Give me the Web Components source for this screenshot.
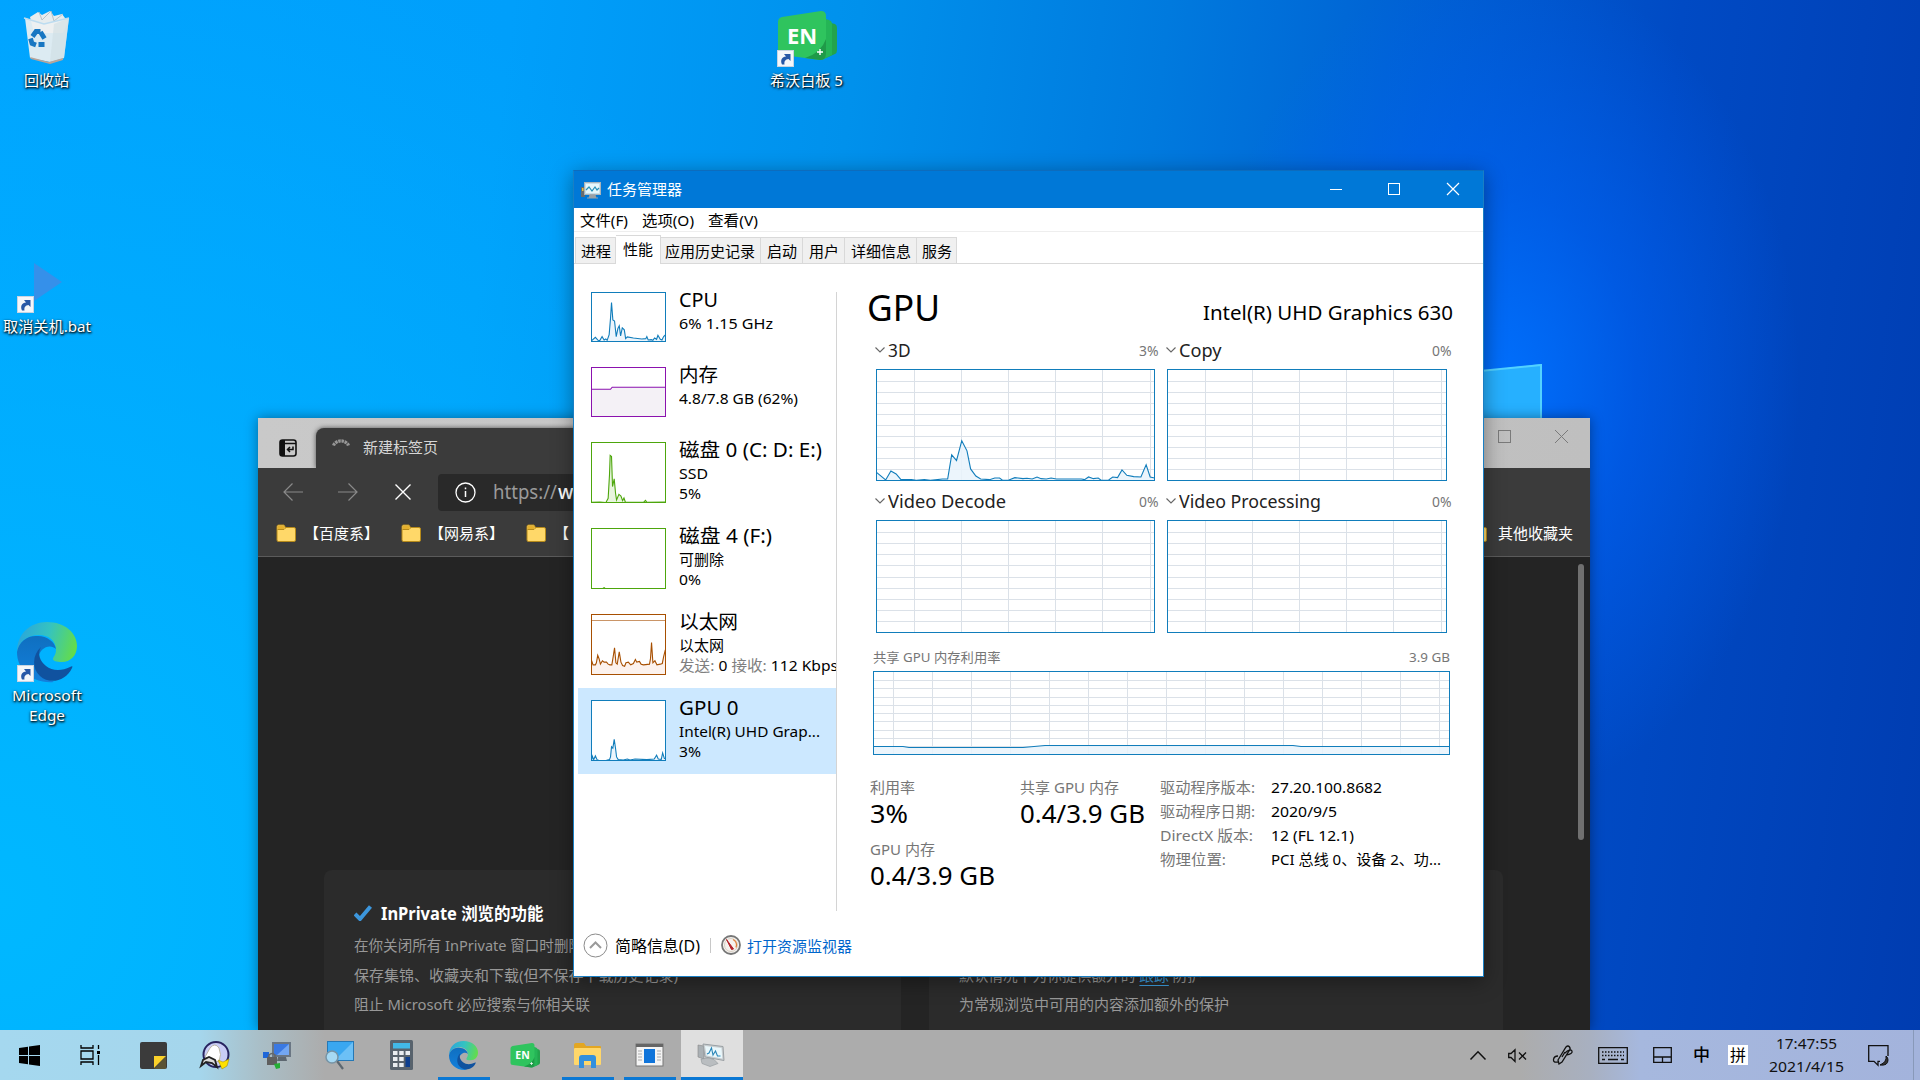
<!DOCTYPE html>
<html lang="zh-CN">
<head>
<meta charset="utf-8">
<title>任务管理器</title>
<style>
html,body{margin:0;height:100%;overflow:hidden}
body{font-family:"Noto Sans","Noto Sans CJK SC",sans-serif;font-size:15px;line-height:20px;color:#000}
</style>
</head>
<body>
<win-desktop></win-desktop>
<script>
const root=(el,html)=>{el.attachShadow({mode:'open'}).innerHTML=html;return el.shadowRoot};

/* Text fitted horizontally to the advance width given in "w". */
customElements.define('ui-text',class extends HTMLElement{
  connectedCallback(){
    if(this.shadowRoot)return;
    const r=root(this,`<style>:host{display:block;white-space:nowrap;flex:none}span{display:inline-block;transform-origin:0 50%;vertical-align:top}</style><span><slot></slot></span>`);
    const w=parseFloat(this.getAttribute('w'));
    if(!w)return;
    this.style.width=w+'px';
    const s=r.querySelector('span'),n=s.getBoundingClientRect().width;
    if(n)s.style.transform=`scaleX(${w/n})`;
  }
});

/* Framed chart; series points live in the coordinate space of "box". */
customElements.define('perf-graph',class extends HTMLElement{
  connectedCallback(){
    const a=n=>this.getAttribute(n);
    const w=+a('w'),h=+a('h'),c=a('color')||'#117dbb',f=a('fill')||'#e9f3fb';
    const lines=(s,v)=>{if(!s)return'';const[o,d,n]=s.split(',').map(Number);let p='';for(let i=0;i<n;i++){const k=Math.round(o+d*i)+.5;p+=v?`M${k} 1V${h-1}`:`M1 ${k}H${w-1}`}return p};
    const b=a('box')||`0 0 ${w} ${h}`,[bx,by,bw,bh]=b.split(' ').map(Number),p=a('points');
    const series=p?`<svg width="${w}" height="${h}" viewBox="${b}" preserveAspectRatio="none"><polygon points="${bx},${by+bh} ${p} ${bx+bw},${by+bh}" fill="${f}" fill-opacity=".85"/><polyline points="${p}" fill="none" stroke="${c}" stroke-width="1.1" vector-effect="non-scaling-stroke"/></svg>`:'';
    const cap=a('cap')?`<path d="M1 ${a('cap')}H${w-1}" stroke="${c}" stroke-opacity=".6"/>`:'';
    root(this,`<style>:host{display:block;flex:none;width:${w}px;height:${h}px}svg{display:block;overflow:hidden}</style>
    <svg width="${w}" height="${h}"><rect width="${w}" height="${h}" fill="#fff"/><path d="${lines(a('gx'),1)}${lines(a('gy'),0)}" stroke="#dbe1e8" fill="none"/>${series}${cap}<rect x=".5" y=".5" width="${w-1}" height="${h-1}" fill="none" stroke="${c}"/></svg>`);
  }
});

const EDGE=`<defs><linearGradient id="ea" x1="0" y1=".3" x2="1" y2=".5"><stop offset="0" stop-color="#2aa5dc"/><stop offset=".5" stop-color="#35c3c0"/><stop offset="1" stop-color="#63dc4c"/></linearGradient><linearGradient id="eb" x1="0" y1="0" x2="0" y2="1"><stop offset="0" stop-color="#0f6fc0"/><stop offset="1" stop-color="#1380dc"/></linearGradient></defs>
<path d="M0 30C0 12 13 0 30 0c18 0 30 11 30 24 0 10-7 16-15 16-6 0-9-1-9-3 0-2 3-4 3-9C39 18 31 13 22 13 10 13 2 20 0 30Z" fill="url(#ea)"/>
<path d="M0 30C2 19 11 13 21 14c9 0 17 6 18 13-6-6-17-1-18 10 0 11 8 19 16 23C15 62 0 48 0 30Z" fill="url(#eb)"/>
<path d="M24 25c-9 8-9 22-1 29 10 9 26 5 32-8 1-2 0-2-2-1-8 4-18 4-24-1-6-5-9-12-5-19Z" fill="#10529f"/>`;
const EN=`<path d="M50 11l8 2q2 1 2 4v22q0 3-2 4l-9 4z" fill="#23a34c"/><path d="M45 7l7 2q3 1 3 4v31l-8 4z" fill="#25b556"/><path d="M5 6L44 0q5 0 5 5v38q0 6-6 6L6 44q-5 0-5-5V11q0-4 4-5Z" fill="#2fc45e"/><path d="M49 28Q44 42 28 47l15 2q6 0 6-6z" fill="#1f9a48"/><path d="M43 38v6M40 41h6" stroke="#fff" stroke-width="1.4"/>`;
const LINK=`<rect x=".5" y=".5" width="16" height="16" fill="#f4f6fa" stroke="#c8d4e2"/><path d="M5 14.5C3 10 5 7 9 6.5L7 4h6.500v7L11.500 9C8.500 9.500 7 11 7.500 14.500Z" fill="#2757a6"/>`;
const TM=`<rect x="0" y="6" width="4" height="10" fill="#676c70"/><rect x="1" y="7" width="1.500" height="3" fill="#e5c040"/><rect x="3.500" y="1.500" width="16" height="12" fill="#c9dfe8" stroke="#a9b4bb"/><rect x="5" y="3" width="13" height="9" fill="#e6f7fc"/><path d="M5 9l3-3 3 4 3-4 2 3 2-2" fill="none" stroke="#2690b8" stroke-width="1.200"/><path d="M9 14h5l1 2.500H8zM6 17h11" fill="#9aa1a6" stroke="#9aa1a6"/>`;
const FOLDER=`<path d="M1 2.500Q1 1 2.500 1H8l1.500 2.500H18q1.500 0 1.500 1.500v11q0 1.500-1.500 1.500H2.500Q1 17.500 1 16Z" fill="#ffd869" stroke="#b68a1a"/><path d="M1.500 5.500H8l2-2" fill="none" stroke="#b68a1a"/><path d="M2 2h5.500L9 3.500 7.800 5H2z" fill="#e5b02c"/>`;

customElements.define('desk-icon',class extends HTMLElement{
  connectedCallback(){
    const art={
     bin:`<path d="M6 7L14 2l4 3 8-4 4 5 8-2 6 8-5 11H10z" fill="#e6ecee"/><path d="M15 2l3 8 9-9 3 10 9-7" fill="none" stroke="#b6c1c8"/><path d="M1 8l20 6 24-6-5 40-14 4L6 48Z" fill="#edf0f1" fill-opacity=".93"/><path d="M0 8l20 6 25-6" fill="none" stroke="#bcdcf0" stroke-width="1.500"/><path d="M45 8l-5 40-14 4 4-38z" fill="#cfdde3" fill-opacity=".6"/><path d="M6 47l19 5 14-4v2l-13 4-19-5z" fill="#b9a59a"/><g fill="none" stroke="#1877c2" stroke-width="4.800"><path d="M8.500 26.500l3.500-5h4.500"/><path d="M16.500 22l4 6.500"/><path d="M20.500 34.500h-6M6.500 28.500l1.500 5 4 1.500"/></g>`,
     bat:`<path d="M17 0l28 19-28 19z" fill="#3590ea"/>`,
     edge:EDGE, en:EN+`<foreignObject x="5" y="10" width="40" height="30"><div style="font:bold 22px/28px 'Noto Sans',sans-serif;color:#fff;text-align:center;text-shadow:none">EN</div></foreignObject>`};
    const k=this.getAttribute('kind'),W=60,H=+this.getAttribute('h');
    root(this,`<style>:host{position:absolute;display:flex;flex-direction:column;align-items:center;color:#fff;text-shadow:1px 1px 2px #000,0 1px 3px rgba(0,0,0,.8)}.p{position:relative;width:${W}px;height:${H}px;margin-bottom:${this.getAttribute('gap')}px}svg{display:block;overflow:visible}.l{position:absolute;left:0;bottom:${this.getAttribute('lb')||0}px}</style>
    <div class="p"><svg width="${W}" height="${H}" viewBox="0 0 ${W} ${H}">${art[k]}</svg>${k=='bin'?'':`<svg class="l" width="17" height="17">${LINK}</svg>`}</div><slot></slot>`);
  }
});

customElements.define('edge-window',class extends HTMLElement{
  connectedCallback(){root(this,`<style>
  :host{position:absolute;left:258px;top:418px;width:1332px;height:612px;background:#242424;display:flex;flex-direction:column;box-shadow:0 0 12px rgba(0,0,0,.4);overflow:hidden;color:#fff}
  svg{display:block;flex:none}
  .top{height:50px;background:linear-gradient(90deg,#c9c9c9,#bfbfbf);display:flex;flex:none}
  .side{width:58px;display:flex;padding:21px 0 0 21px;box-sizing:border-box}
  .tab{width:500px;height:40px;margin-top:10px;background:#3b3b3b;border-radius:8px 0 0 0;display:flex;align-items:center;color:#d6d6d6;box-shadow:0 0 5px rgba(0,0,0,.6);clip-path:inset(-5px 0 0 -5px)}
  .tab svg{margin:-6px 13px 0 16px}.tab ui-text{margin-top:-3px}
  .wb{margin-left:auto;display:flex;gap:44px;padding:12px 22px 0 0}
  .bar{height:48px;flex:none;background:#3b3b3b;display:flex;align-items:center}
  .addr{margin-left:27px;height:37px;width:1030px;background:#292929;border-radius:4px;display:flex;align-items:center;padding-left:17px;box-sizing:border-box;font-size:19px;color:#9a9a9a}
  .addr ui-text{margin-left:17px}.addr b{font-weight:500;color:#fff;margin-left:1px}
  .pill{width:54px;height:37px;border-radius:0 19px 19px 0;background:#0a6fbb;display:flex;align-items:center;justify-content:flex-end;padding-right:5px;box-sizing:border-box;margin-left:-223px}
  .fav{height:41px;flex:none;background:#3b3b3b;border-bottom:1px solid #5b5b5b;display:flex;align-items:flex-start;padding:7px 17px 0 18px;box-sizing:border-box}
  .fav ui-text{margin:0 22px 0 7px}.fav svg{margin-top:1px}
  .fav .r{margin-left:auto;display:flex}.fav .r ui-text{margin:0 0 0 10px}
  .body{flex:1;display:flex;padding-left:66px;gap:29px;align-items:flex-end;position:relative}
  .card{height:160px;background:#2b2b2b;border-radius:8px 8px 0 0;width:577px;box-sizing:border-box;padding:33px 31px 0 30px;color:#989898;flex:none}
  .card.b{width:574px}
  .h{display:flex;color:#fff;font-weight:bold;font-size:17.500px;margin-bottom:12px;align-items:center}
  .h svg{margin-right:9px}
  .row{margin-bottom:9.500px;display:flex}
  .sb{position:absolute;right:6px;top:7px;width:6px;height:276px;border-radius:3px;background:#707070}
  u{color:#3c9ddd;text-decoration:none;border-bottom:1px solid #3c9ddd}
  </style>
  <div class="top"><div class="side"><svg width="18" height="18"><rect x="1" y="1" width="16" height="16" rx="2.500" fill="none" stroke="#111" stroke-width="1.600"/><path d="M1 3q0-2 2-2h3v16H3q-2 0-2-2z" fill="#111"/><path d="M1 4.500h16" stroke="#111" stroke-width="1.500"/><path d="M14 7.500v3H8.500M11 8l-2.500 2.500L11 13" fill="none" stroke="#111" stroke-width="1.500"/></svg></div>
  <div class="tab"><svg width="18" height="16" viewBox="0 0 18 16"><path d="M1.500 8.500A8 7 0 0 1 16.500 8.500" fill="none" stroke="#969696" stroke-width="3.200" stroke-dasharray="2.500 .7"/></svg><ui-text w="75">新建标签页</ui-text></div>
  <div class="wb"><svg width="13" height="13"><rect x=".5" y=".5" width="12" height="12" fill="none" stroke="#7a7a7a"/></svg><svg width="13" height="13"><path d="M0 0l13 13M13 0L0 13" stroke="#7a7a7a"/></svg></div></div>
  <div class="bar"><svg style="margin-left:25px" width="20" height="18"><path d="M20 9H1M9.500 .5L1 9l8.500 8.500" fill="none" stroke="#8a8a8a" stroke-width="1.200"/></svg>
  <svg style="margin-left:35px" width="20" height="18"><path d="M0 9h19M10.500 .5L19 9l-8.500 8.500" fill="none" stroke="#8a8a8a" stroke-width="1.200"/></svg>
  <svg style="margin-left:37px" width="16" height="16"><path d="M.5 .5l15 15M15.500 .5l-15 15" stroke="#fff" stroke-width="1.400"/></svg>
  <div class="addr"><svg width="21" height="21"><circle cx="10.500" cy="10.500" r="9.500" fill="none" stroke="#fff" stroke-width="1.300"/><path d="M10.500 9v6M10.500 5.500v1.800" stroke="#fff" stroke-width="1.500"/></svg><ui-text w="64">https://</ui-text><b>w</b></div>
  <div class="pill" style="margin-left:-224px"><svg width="30" height="30"><circle cx="15" cy="15" r="15" fill="#2b2b2b"/><circle cx="15" cy="11" r="6" fill="#8e8e8e"/><path d="M5 26q1-8 10-8t9 6q-7 8-19 2Z" fill="#a9a9a9"/></svg></div>
  <svg style="margin-left:24px" width="20" height="6"><g fill="#fff"><circle cx="3" cy="3" r="1.700"/><circle cx="9.500" cy="3" r="1.700"/><circle cx="16" cy="3" r="1.700"/></g></svg></div>
  <div class="fav"><svg width="21" height="19">${FOLDER}</svg><ui-text w="75">【百度系】</ui-text><svg width="21" height="19">${FOLDER}</svg><ui-text w="75">【网易系】</ui-text><svg width="21" height="19">${FOLDER}</svg><ui-text w="15">【</ui-text>
  <div class="r"><svg width="21" height="19">${FOLDER}</svg><ui-text w="75">其他收藏夹</ui-text></div></div>
  <div class="body">
   <div class="card"><div class="h"><svg width="18" height="16"><path d="M1 9l5 5L16.500 1.500" fill="none" stroke="#3c96dc" stroke-width="4"/></svg><ui-text w="162.500">InPrivate 浏览的功能</ui-text></div>
    <div class="row"><ui-text w="229">在你关闭所有 InPrivate 窗口时删除</ui-text></div><div class="row"><ui-text w="324">保存集锦、收藏夹和下载(但不保存下载历史记录)</ui-text></div><div class="row"><ui-text w="236">阻止 Microsoft 必应搜索与你相关联</ui-text></div></div>
   <div class="card b" style="margin-left:-1px"><div class="h">&nbsp;</div><div class="row">&nbsp;</div><div class="row"><ui-text w="243">默认情况下为你提供额外的 <u>跟踪</u> 防护</ui-text></div><div class="row"><ui-text w="270">为常规浏览中可用的内容添加额外的保护</ui-text></div></div>
   <div class="sb"></div></div>`)}
});

customElements.define('perf-item',class extends HTMLElement{
  connectedCallback(){root(this,`<style>:host{display:flex;box-sizing:border-box;height:${this.getAttribute('h')}px;padding:12px 0 0 13px;gap:13px;overflow:hidden}:host([on]){background:#cce8ff}
  .t{margin-top:-3px;font-size:15px}</style><slot name="g"></slot><div class="t"><slot></slot></div>`)}
});
customElements.define('gpu-engine',class extends HTMLElement{
  connectedCallback(){
    const a=n=>this.getAttribute(n),w=a('w'),col=a('col')=='2';
    root(this,`<style>:host{display:flex;flex-direction:column;width:${+w+(col?4:3)}px}.h{display:flex;align-items:center;height:24px;margin-bottom:7px;color:#222;font-size:18px}.h svg{margin:0 3px 0 -1px}.v{margin-left:auto;font-size:15px;color:#767676}</style>
    <div class="h"><svg width="10" height="6"><path d="M.5 .5L5 5 9.500 .5" fill="none" stroke="#666" stroke-width="1.100"/></svg><ui-text w="${a('tw')}">${a('name')}</ui-text><ui-text class="v" w="19.500">${a('val')}</ui-text></div>
    <perf-graph w="${w}" h="${a('h')}" gx="38,47.100,6" gy="${a('gy')}" box="40 268 693 334" ${a('points')?`points="${a('points')}"`:''}></perf-graph>`)}
});

customElements.define('task-manager',class extends HTMLElement{
  connectedCallback(){root(this,`<style>
  :host{position:absolute;left:573px;top:170px;width:911px;height:807px;box-sizing:border-box;background:#fff;border:1px solid #1a7fc4;border-top-color:#0d6cbd;display:flex;flex-direction:column;box-shadow:0 4px 20px rgba(0,0,0,.38)}
  svg{display:block;flex:none}
  .tb{height:37px;background:#0078d7;color:#fff;display:flex;align-items:center;padding-left:7px;flex:none}
  .tb ui-text{margin:-1px 0 0 6px}.bt{margin-left:auto;display:flex;padding-right:1px}.bt svg{width:58px;height:37px}
  .menu{height:24px;display:flex;padding:2px 0 0 6px;box-sizing:border-box;border-bottom:1px solid #eee;flex:none}
  .tabs{height:31px;display:flex;align-items:flex-end;border-bottom:1px solid #d9d9d9;padding-left:1px;flex:none}
  .tabs div{box-sizing:border-box;height:26px;background:#f0f0f0;border:1px solid #d9d9d9;border-width:1px 1px 0 0;padding-top:3px;display:flex;justify-content:center}
  .tabs div:first-child{border-left-width:1px}
  .tabs .on{height:29px;background:#fff;margin-bottom:-1px;padding-top:3px;border-right-width:1px}
  .main{flex:1;display:flex;min-height:0}
  .list{width:258px;border-right:1px solid #d4d4d4;height:619px;margin:28px 0 0 4px;padding:0;box-sizing:content-box;flex:none}
  .list>:first-child{margin-top:-12px}
  .n{font-size:19px;line-height:23px;margin-bottom:1px}
  i{font-style:normal;color:#808080}
  .pane{padding:22px 0 0 31px;flex:1}
  .hd{display:flex;align-items:baseline;justify-content:space-between;width:585px;height:54px;line-height:42px;font-size:37px}
  .hd>:first-child{margin-left:-1px}
  .hd .s{font-size:20.500px;transform:translateY(-1px)}
  .eng{display:grid;grid-template-columns:291px 285px;padding-left:8px;margin-top:-2px;row-gap:8px}
  .sh{display:flex;justify-content:space-between;width:577px;font-size:13px;color:#767676;padding-left:5px;margin:14px 0 4px}
  .sg{margin-left:5px}
  .st{display:flex;margin-top:22px;padding-left:2px;color:#767676}
  .big{font-size:25.500px;line-height:32px;color:#000;margin:0 0 9.500px}
  .kv{display:flex;height:24px}.kv .k{width:111px}.kv .v{color:#000}
  .ft{height:62px;display:flex;align-items:center;padding-left:9px;flex:none;font-size:16px}
  .ft ui-text{margin-top:2px}
  .sep{width:1px;height:15px;background:#c8c8c8;margin:0 10px}
  </style>
  <div class="tb"><svg width="20" height="18">${TM}</svg><ui-text w="75">任务管理器</ui-text>
  <div class="bt"><svg><path d="M22 18.500h12" stroke="#fff"/></svg><svg><rect x="22.500" y="12.500" width="11" height="11" fill="none" stroke="#fff"/></svg><svg><path d="M23 12l12 12M35 12L23 24" stroke="#fff" stroke-width="1.200"/></svg></div></div>
  <div class="menu"><ui-text w="48" style="margin-right:14px">文件(F)</ui-text><ui-text w="52" style="margin-right:14px">选项(O)</ui-text><ui-text w="50">查看(V)</ui-text></div>
  <div class="tabs"><div style="width:41px"><ui-text w="30">进程</ui-text></div><div class="on" style="width:45px"><ui-text w="30">性能</ui-text></div><div style="width:100px"><ui-text w="90" style="margin-left:-2px">应用历史记录</ui-text></div><div style="width:42px"><ui-text w="30">启动</ui-text></div><div style="width:42px"><ui-text w="30">用户</ui-text></div><div style="width:72px"><ui-text w="60">详细信息</ui-text></div><div style="width:40px"><ui-text w="30">服务</ui-text></div></div>
  <div class="main"><div class="list">
   <perf-item h="75"><perf-graph slot="g" w="75" h="50" box="64 382 223 148" points="66,526 77,516 85,525 90,526 97,514 103,524 108,521 112,525 118,508 122,460 125,413 129,465 134,468 139,514 144,490 148,482 152,512 157,488 163,494 167,520 172,515 190,518 215,521 227,520 230,514 234,524 243,523 248,525 253,518 259,522 263,510 270,522 275,524 280,514 286,508"></perf-graph><ui-text class="n" w="39">CPU</ui-text><ui-text w="94">6% 1.15 GHz</ui-text></perf-item>
   <perf-item h="75"><perf-graph slot="g" w="75" h="50" color="#8b12ae" fill="#f2eef4" box="64 607 223 148" points="65,673 122,673 127,667 286,667"></perf-graph><ui-text class="n" w="39">内存</ui-text><ui-text w="119">4.8/7.8 GB (62%)</ui-text></perf-item>
   <perf-item h="86"><perf-graph slot="g" w="75" h="61" color="#4da60c" fill="#e4f3d8" box="64 832 223 182" points="66,1012 90,1011 108,1013 115,1000 119,930 121,872 125,875 128,965 133,942 137,985 140,1005 147,988 153,993 158,1007 162,999 166,1011 220,1012 226,1006 230,1012 286,1011"></perf-graph><ui-text class="n" w="143">磁盘 0 (C: D: E:)</ui-text><ui-text w="29">SSD</ui-text><ui-text w="22">5%</ui-text></perf-item>
   <perf-item h="86"><perf-graph slot="g" w="75" h="61" color="#4da60c" box="64 115 223 182" points="98,296 103,293 107,296"></perf-graph><ui-text class="n" w="93">磁盘 4 (F:)</ui-text><ui-text w="45">可删除</ui-text><ui-text w="22">0%</ui-text></perf-item>
   <perf-item h="86"><perf-graph slot="g" w="75" h="61" color="#a74f01" fill="#fbf0ea" cap="6.500" box="64 374 223 180" points="66,512 70,524 77,524 80,518 84,496 88,506 92,522 98,512 103,516 110,516 115,522 120,524 126,524 130,500 134,474 138,518 142,522 148,486 153,516 158,526 164,528 168,518 175,516 182,524 190,520 196,508 200,516 208,514 213,522 220,524 238,522 241,505 244,458 248,518 254,512 260,524 270,522 276,520 280,500 285,480"></perf-graph><ui-text class="n" w="59">以太网</ui-text><ui-text w="45">以太网</ui-text><ui-text w="159"><i>发送:</i> 0 <i>接收:</i> 112 Kbps</ui-text></perf-item>
   <perf-item h="86" on><perf-graph slot="g" w="75" h="61" box="64 632 223 180" points="66,808 68,798 72,808 77,797 82,808 90,811 110,810 119,808 122,800 125,770 129,774 133,748 137,775 140,800 145,808 160,809 172,806 180,809 195,806 230,808 252,806 259,795 264,806 273,807 277,788 282,804 287,806"></perf-graph><ui-text class="n" w="59.500">GPU 0</ui-text><ui-text w="141">Intel(R) UHD Grap...</ui-text><ui-text w="22">3%</ui-text></perf-item>
  </div>
  <div class="pane">
   <div class="hd"><ui-text w="73">GPU</ui-text><ui-text class="s" w="250">Intel(R) UHD Graphics 630</ui-text></div>
   <div class="eng">
    <gpu-engine w="279" h="112" gy="12,11,9" name="3D" tw="22.500" val="3%" points="42,577 64,599 77,572 90,581 102,598 128,598 140,600 160,598 175,600 205,596 218,596 228,524 240,541 253,482 266,512 275,566 288,587 300,596 322,598 335,593 347,593 355,600 370,599 385,592 405,595 415,594 428,596 440,590 450,595 463,596 475,593 488,596 550,596 558,598 568,590 580,595 592,593 600,600 618,599 628,590 640,592 651,569 663,585 680,589 698,590 711,554 721,590 732,593"></gpu-engine>
    <gpu-engine w="280" h="112" col="2" gy="12,11,9" name="Copy" tw="42.500" val="0%"></gpu-engine>
    <gpu-engine w="279" h="113" gy="12,11.150,9" name="Video Decode" tw="118" val="0%"></gpu-engine>
    <gpu-engine w="280" h="113" col="2" gy="12,11.150,9" name="Video Processing" tw="142" val="0%"></gpu-engine>
   </div>
   <div class="sh"><ui-text w="127.500">共享 GPU 内存利用率</ui-text><ui-text w="41">3.9 GB</ui-text></div>
   <perf-graph class="sg" w="577" h="84" gx="20,39,15" gy="9,8.250,9" points="0,75.500 30,75.500 36,76.500 150,76.500 172,74.500 420,74.500 428,75.500 577,75.500"></perf-graph>
   <div class="st"><div style="width:150px"><ui-text w="45">利用率</ui-text><ui-text class="big" w="38">3%</ui-text><ui-text w="65">GPU 内存</ui-text><ui-text class="big" w="125">0.4/3.9 GB</ui-text></div>
   <div style="width:140px"><ui-text w="99">共享 GPU 内存</ui-text><ui-text class="big" w="125">0.4/3.9 GB</ui-text></div>
   <div><div class="kv"><div class="k"><ui-text w="95">驱动程序版本:</ui-text></div><ui-text class="v" w="111">27.20.100.8682</ui-text></div>
   <div class="kv"><div class="k"><ui-text w="95">驱动程序日期:</ui-text></div><ui-text class="v" w="66">2020/9/5</ui-text></div>
   <div class="kv"><div class="k"><ui-text w="93">DirectX 版本:</ui-text></div><ui-text class="v" w="83">12 (FL 12.1)</ui-text></div>
   <div class="kv"><div class="k"><ui-text w="66">物理位置:</ui-text></div><ui-text class="v" w="170">PCI 总线 0、设备 2、功...</ui-text></div></div></div>
  </div></div>
  <div class="ft"><svg width="25" height="25"><circle cx="12.500" cy="12.500" r="11.500" fill="#fff" stroke="#8b8b8b"/><path d="M7 15l5.500-5.500L18 15" fill="none" stroke="#9a9a9a" stroke-width="2"/></svg><ui-text w="85" style="margin-left:7px">简略信息(D)</ui-text><div class="sep"></div>
  <svg width="20" height="20"><circle cx="10" cy="10" r="9" fill="#f5f2ee" stroke="#777" stroke-width="1.800"/><circle cx="10" cy="10" r="6.500" fill="none" stroke="#d8cfc4"/><path d="M12 4.500a6 6 0 0 1 3 8" fill="none" stroke="#e0813a" stroke-width="1.300"/><path d="M5.500 4.500l7 9.500-2 .5z" fill="#b4232a" stroke="#b4232a"/></svg><ui-text w="105" style="margin-left:6px;color:#0066cc;font-size:15px">打开资源监视器</ui-text></div>`)}
});

customElements.define('task-bar',class extends HTMLElement{
  connectedCallback(){
   const app=(w,h,s,c='')=>`<div class="a ${c}"><svg width="${w}" height="${h}" viewBox="0 0 ${w} ${h}">${s}</svg></div>`;
   root(this,`<style>
   :host{position:absolute;left:0;top:1030px;width:1920px;height:50px;display:flex;background:linear-gradient(90deg,#a5d8ef 0,#a5d6ec 200px,#a9bfc8 258px,#acacac 325px,#acacac 1520px,#a8b0c0 1590px,#a6b8de 1640px,#a3b3dc 1920px)}
   .a{width:62px;height:50px;box-sizing:border-box;padding-right:2px;display:flex;align-items:center;justify-content:center;position:relative;flex:none}
   .run::after{content:"";position:absolute;left:5px;right:5px;bottom:0;height:3px;background:#0a78d4}
   .on{background:#dfdfdf}.on::after{left:0;right:0}
   svg{display:block;flex:none;overflow:visible}
   .tray{margin-left:auto;display:flex;align-items:center}
   .tray svg{fill:none;stroke:#111;stroke-width:1.300}
   .clk{display:flex;flex-direction:column;align-items:center;gap:3px;margin:-2px 0 0 21px;width:75px;color:#111}
   .py{background:#fff;width:20px;height:20px;font-size:16px;line-height:20px;text-align:center;margin-left:18px}
   </style>
   <div class="a" style="width:60px"><svg width="21" height="21"><path d="M0 3l9-1.300V10H0zM10 1.500L21 0v10H10zM0 11h9v8.300L0 18zM10 11h11v10l-11-1.500z"/></svg></div>
   <div class="a" style="width:63px;padding-right:4px"><svg width="20" height="20"><path d="M1 0v3h12V0M1 20v-3h12v3M1 6h12v8H1zM18.500 0v4M18.500 10v10" fill="none" stroke="#000" stroke-width="1.300"/><path d="M17 6h3v3h-3z"/></svg></div>
   ${app(27,27,'<rect width="27" height="27" rx="2" fill="#3b3b3b"/><path d="M14 14h12L14 26z" fill="#fbd22a"/><path d="M26 14v13H14z" fill="#d9b31e" opacity=".2"/>')}
   ${app(30,28,'<ellipse cx="16" cy="13.500" rx="12.500" ry="12.500" fill="#c9cdf5" stroke="#26235f" stroke-width="2"/><path d="M10 7q5-6 9 0 3 6 0 14l-9-3-5-2z" fill="#fff" stroke="#b9b5a5"/><path d="M1 25l2-6 6-3 6 3 2 7-5-4-6-1z" fill="#ddd" stroke="#222" stroke-width="1.800"/><path d="M18 19l5 2 6-3-2 7-5 3z" fill="#ffe100" stroke="#998500" stroke-width=".5"/>')}
   ${app(28,28,'<rect x="9" y="1" width="19" height="15" fill="#6a7683"/><rect x="11" y="3" width="15" height="11" fill="#3a79e3"/><path d="M26 3L14 14h12z" fill="#73a7f2"/><path d="M15 16h8l1 4H14z" fill="#5d6770"/><rect x="0" y="11" width="6" height="6" fill="#1e66d8"/><rect x="4" y="16" width="10" height="8" fill="#5f5f5f"/><path d="M6 16v-2q3-3 6 0v2" fill="none" stroke="#666" stroke-width="1.500"/><path d="M11 23l6-1v5l-4 1z" fill="#25ae35"/>')}
   ${app(29,28,'<rect x="2.500" y=".5" width="26" height="19" fill="#3aa7f0" stroke="#2678b5"/><path d="M28 1L10 19h18z" fill="#6cc0f6"/><path d="M12 20l6 8" stroke="#5c6770" stroke-width="2.200"/><circle cx="7" cy="16" r="6" fill="#a6d9f3" stroke="#7794a5" stroke-width="1.500"/>')}
   ${app(23,30,'<rect width="23" height="30" rx="1.500" fill="#58636d"/><rect x="3" y="3" width="17" height="5.500" fill="#42b9e8"/><g fill="#e9edf0"><path d="M3 11h4.500v4H3zM9.200 11h4.500v4H9.200zM15.500 11H20v4h-4.500zM3 17h4.500v4H3zM9.200 17h4.500v4H9.200zM3 23h4.500v4H3zM9.200 23h4.500v4H9.200z"/></g><path d="M15.500 17H20v10h-4.500z" fill="#0d3f8f"/>')}
   <div class="a run"><svg width="29" height="29" viewBox="0 0 60 60">${EDGE}</svg></div>
   <div class="a"><svg width="30" height="25" viewBox="0 0 60 50">${EN}<foreignObject x="0" y="4" width="50" height="38"><div style="font:bold 21px/38px 'Noto Sans',sans-serif;color:#fff;text-align:center">EN</div></foreignObject></svg></div>
   ${app(29,25,'<path d="M1 2q0-2 2-2h8l2 3h14q1 0 1 1v4H1z" fill="#e3a621"/><rect x="1" y="5" width="27" height="17" rx="1" fill="#ffd76a"/><path d="M6 25V15q0-3 3-3h11q3 0 3 3v10h-5v-7h-7v7z" fill="#3390dd"/>','run')}
   ${app(27,22,'<rect width="27" height="22" fill="#f4f4f4" stroke="#777"/><path d="M0 1.500h27" stroke="#666" stroke-width="3"/><rect x="8" y="5" width="11" height="14" fill="#0f74da"/><path d="M2 7h4M2 10h4M2 13h4M2 16h4M21 7h4M21 10h4M21 13h4M21 16h4" stroke="#aaa"/>','run')}
   ${app(28,24,'<path d="M1 2l6 1v13l-6-2z" fill="#aab0b4" stroke="#888" stroke-width=".6"/><path d="M6 1l20 2.500 1 14L8 14z" fill="#c9ced1" stroke="#9aa0a4"/><path d="M8 3l16.500 2 .8 10.500L9.500 12.500z" fill="#e9f7fb"/><path d="M10 11l2-1 2.500-5 1.500 7 2.500-4 2 5 3 0" fill="none" stroke="#2a86b8" stroke-width="1.100"/><path d="M4 16l8-1 5 1.500 4 4-8 3-8-3z" fill="#b9bdc0" stroke="#8f9599" stroke-width=".6"/>','run on')}
   <div class="tray"><svg width="16" height="9"><path d="M.5 8.500L8 .8l7.500 7.700" stroke-width="1.500"/></svg>
   <svg style="margin-left:22px" width="18" height="13"><path d="M.7 4.500v4H3l4 4V.7l-4 3.800zM11 3.500l7 7M18 3.500l-7 7"/></svg>
   <svg style="margin-left:27px" width="20" height="20"><path d="M6 19L5 15 13 2q2-2 3.500 0t-.5 4L9 17zM12 8q5-5 7-2 1 3-6 4M5 11q-4 0-4.500 3.500T5 17M9 12l3-5"/></svg>
   <svg style="margin-left:25px" width="30" height="17"><path d="M.7.7h28.600v15.600H.7z"/><path d="M4 5h22M4 8.500h22" stroke-dasharray="1.500 1.500"/><path d="M4 12.500h3M10 12.500h10M23 12.500h3" stroke-width="1.500"/></svg>
   <svg style="margin-left:25px" width="19" height="16"><path d="M.7.7h17.600v14.600H.7zM.7 10h17.600M9.500 10v5"/></svg>
   <ui-text w="17" style="margin-left:21px;font-size:17px;font-weight:500">中</ui-text><div class="py">拼</div>
   <div class="clk"><ui-text w="61">17:47:55</ui-text><ui-text w="75">2021/4/15</ui-text></div>
   <svg style="margin-left:24px" width="21" height="21"><path d="M20 11V.7H.7v15.600H6l4 4v-4h2"/><path d="M18 11q1 6-6 9 8 1 8-5 0-3-2-4z" fill="#333" stroke-width="1"/></svg>
   <div style="width:1px;height:50px;background:#8899b9;margin:0 6px 0 24px"></div></div>`)}
});

customElements.define('win-desktop',class extends HTMLElement{
  connectedCallback(){root(this,`<style>
  :host{display:block;position:relative;width:1920px;height:1080px;overflow:hidden;background:
   radial-gradient(ellipse 300px 420px at 1500px 380px,rgba(0,112,255,.95),rgba(0,100,250,.55) 45%,rgba(0,80,220,0) 100%),
   radial-gradient(ellipse 1000px 1000px at 0 900px,rgba(0,184,255,1) 0,rgba(0,180,255,.8) 35%,rgba(0,170,255,0) 100%),
   linear-gradient(97deg,#00a2ff 0,#009ffb 25%,#0091ec 42%,#007ade 57%,#005fd2 70%,#004ac4 82%,#003cb0 100%)}
  .wall{position:absolute;left:1480px;top:364px}
  </style>
  <svg class="wall" width="63" height="60"><path d="M0 7L61 0v60H0z" fill="#26b0ff"/><path d="M0 7L61 1v60" fill="none" stroke="#52d2ff" stroke-width="2"/></svg>
  <desk-icon kind="bin" h="52" gap="8" style="left:24px;top:10px;align-items:flex-start"><ui-text w="45">回收站</ui-text></desk-icon>
  <desk-icon kind="bat" h="50" gap="3" style="left:3px;top:263px"><ui-text w="88">取消关机.bat</ui-text></desk-icon>
  <desk-icon kind="edge" h="60" gap="3" style="left:12px;top:622px"><ui-text w="70">Microsoft</ui-text><ui-text w="36">Edge</ui-text></desk-icon>
  <desk-icon kind="en" h="56" gap="3" style="left:770px;top:11px"><ui-text w="73">希沃白板 5</ui-text></desk-icon>
  <edge-window></edge-window>
  <task-manager></task-manager>
  <task-bar></task-bar>`)}
});
</script>
</body>
</html>
